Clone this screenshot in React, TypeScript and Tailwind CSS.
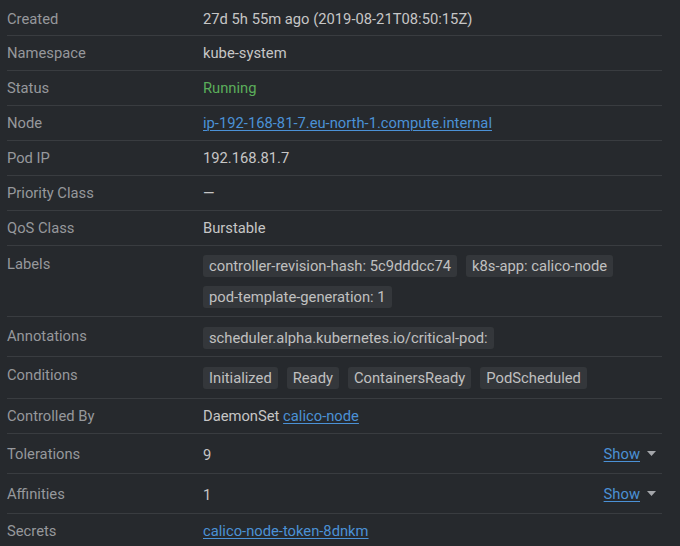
import React from "react";

const font = { fontFamily: "Roboto, 'Noto Sans', Arial, sans-serif" };

function Row({
  label,
  children,
  className = "py-[8px]",
  labelClass = "",
}: {
  label: string;
  children: React.ReactNode;
  className?: string;
  labelClass?: string;
}) {
  return (
    <div className={`flex border-b border-[#393c40] ${className}`}>
      <div className={`w-[196px] shrink-0 text-[#96989c] leading-[18px] ${labelClass}`}>{label}</div>
      <div className="flex-1 min-w-0 text-[#c6c6c6] leading-[18px]">{children}</div>
    </div>
  );
}

function Chip({ children }: { children: React.ReactNode }) {
  return (
    <span className="inline-flex h-[22px] items-center rounded-[3px] bg-[#34373b] px-[6px] text-[#c0c0c0] leading-[22px]">
      {children}
    </span>
  );
}

function Link({ children }: { children: React.ReactNode }) {
  return <span className="text-[#4b91d6] underline underline-offset-[2px] decoration-[1px]">{children}</span>;
}

function Show() {
  return (
    <span className="flex items-center gap-[7px] pr-[6px]">
      <Link>Show</Link>
      <svg width="9" height="5" viewBox="0 0 9 5">
        <path d="M0 0 L9 0 L4.5 5 Z" fill="#a4a6aa" />
      </svg>
    </span>
  );
}

export default function App() {
  return (
    <div className="w-[680px] h-[546px] overflow-hidden bg-[#26292d] text-[14.75px]" style={font}>
      <div className="ml-[7px] w-[655px]">
        <Row label="Created" className="pt-[10px] pb-[7px]">
          27d 5h 55m ago (2019-08-21T08:50:15Z)
        </Row>
        <Row label="Namespace">kube-system</Row>
        <Row label="Status">
          <span className="text-[#5bae5b]">Running</span>
        </Row>
        <Row label="Node">
          <Link>ip-192-168-81-7.eu-north-1.compute.internal</Link>
        </Row>
        <Row label="Pod IP">192.168.81.7</Row>
        <Row label="Priority Class">—</Row>
        <Row label="QoS Class">Burstable</Row>
        <Row label="Labels" className="pt-[9px] pb-[8px]">
          <div className="flex flex-wrap gap-x-[9px] gap-y-[9px]">
            <Chip>controller-revision-hash: 5c9dddcc74</Chip>
            <Chip>k8s-app: calico-node</Chip>
            <Chip>pod-template-generation: 1</Chip>
          </div>
        </Row>
        <Row label="Annotations" className="pt-[10px] pb-[7px]">
          <div className="flex flex-wrap gap-[9px]">
            <Chip>scheduler.alpha.kubernetes.io/critical-pod:</Chip>
          </div>
        </Row>
        <Row label="Conditions" className="pt-[10px] pb-[9px]" labelClass="-mt-[1px]">
          <div className="flex flex-wrap gap-[9px]">
            <Chip>Initialized</Chip>
            <Chip>Ready</Chip>
            <Chip>ContainersReady</Chip>
            <Chip>PodScheduled</Chip>
          </div>
        </Row>
        <Row label="Controlled By">
          DaemonSet <Link>calico-node</Link>
        </Row>
        <Row label="Tolerations" className="py-[10px]" labelClass="pt-[1px]">
          <div className="flex items-center justify-between h-[19px]">
            <span className="pt-[2px]">9</span>
            <Show />
          </div>
        </Row>
        <Row label="Affinities" className="py-[10px]" labelClass="pt-[1px]">
          <div className="flex items-center justify-between h-[19px]">
            <span className="pt-[2px]">1</span>
            <Show />
          </div>
        </Row>
        <Row label="Secrets">
          <Link>calico-node-token-8dnkm</Link>
        </Row>
      </div>
    </div>
  );
}
